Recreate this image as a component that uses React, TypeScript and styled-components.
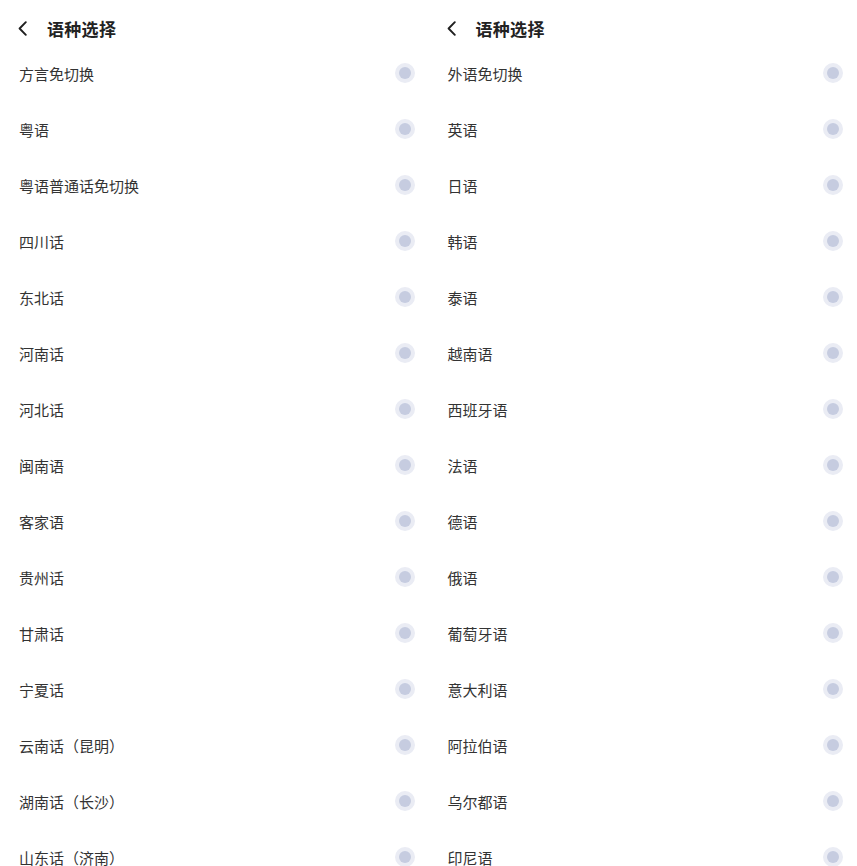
import React from 'react';
import styled, { createGlobalStyle } from 'styled-components';

const GlobalStyle = createGlobalStyle`
  html, body {
    margin: 0;
    padding: 0;
    background: #ffffff;
    font-family: "Noto Sans CJK SC", "Noto Sans", sans-serif;
  }
`;

const dialects = [
  '方言免切换',
  '粤语',
  '粤语普通话免切换',
  '四川话',
  '东北话',
  '河南话',
  '河北话',
  '闽南语',
  '客家语',
  '贵州话',
  '甘肃话',
  '宁夏话',
  '云南话（昆明）',
  '湖南话（长沙）',
  '山东话（济南）',
];

const foreign = [
  '外语免切换',
  '英语',
  '日语',
  '韩语',
  '泰语',
  '越南语',
  '西班牙语',
  '法语',
  '德语',
  '俄语',
  '葡萄牙语',
  '意大利语',
  '阿拉伯语',
  '乌尔都语',
  '印尼语',
];

const Page = styled.div`
  display: grid;
  grid-template-columns: 1fr 1fr;
  height: 866px;
  overflow: hidden;
`;

const Panel = styled.section`
  display: flex;
  flex-direction: column;
  padding: 11px 14px 0 19px;
`;

const Header = styled.header`
  display: flex;
  align-items: center;
  gap: 20px;
  height: 34px;
`;

const BackButton = styled.span`
  display: flex;
  align-items: center;
  width: 9px;
  margin-left: -1px;
  color: #1f1f1f;
`;

const Title = styled.h1`
  margin: 0;
  font-size: 17px;
  font-weight: 700;
  color: #222222;
  letter-spacing: 0.3px;
`;

const List = styled.ul`
  list-style: none;
  margin: 0;
  padding: 0;
`;

const Row = styled.li`
  display: flex;
  align-items: center;
  justify-content: space-between;
  height: 56px;
  font-size: 15px;
  color: #333333;
`;

const Radio = styled.span`
  display: flex;
  align-items: center;
  justify-content: center;
  width: 20px;
  height: 20px;
  border-radius: 50%;
  background: #eaecf4;

  &::after {
    content: '';
    width: 12px;
    height: 12px;
    border-radius: 50%;
    background: #c6cce0;
  }
`;

const Chevron = () => (
  <svg width="9" height="15" viewBox="0 0 9 15" fill="none">
    <path d="M7.8 1.2 L1.6 7.5 L7.8 13.8" stroke="currentColor" strokeWidth="1.9" strokeLinecap="round" strokeLinejoin="round" />
  </svg>
);

const LanguagePanel = ({ items }: { items: string[] }) => (
  <Panel>
    <Header>
      <BackButton>
        <Chevron />
      </BackButton>
      <Title>语种选择</Title>
    </Header>
    <List>
      {items.map((name) => (
        <Row key={name}>
          <span>{name}</span>
          <Radio />
        </Row>
      ))}
    </List>
  </Panel>
);

export default function App() {
  return (
    <>
      <GlobalStyle />
      <Page>
        <LanguagePanel items={dialects} />
        <LanguagePanel items={foreign} />
      </Page>
    </>
  );
}
